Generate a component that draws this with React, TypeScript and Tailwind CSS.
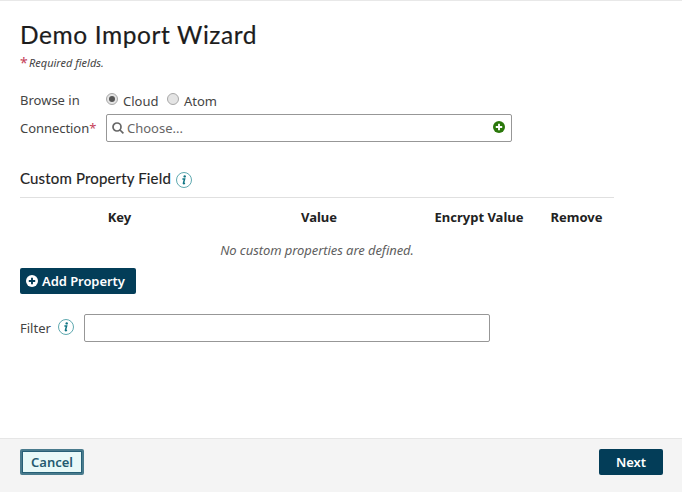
import React from "react";

function Info() {
  return (
    <span className="flex size-4 shrink-0 items-center justify-center rounded-full border border-[#5fa9b0] text-[#107584]">
      <svg width="8" height="10" viewBox="0 0 8 10" fill="none" className="block">
        <circle cx="4.7" cy="1.4" r="1.2" fill="currentColor" />
        <path d="M2.4 4h2.2L3.4 8.3q-.1.8 1.6 0" stroke="currentColor" strokeWidth="1.5" />
      </svg>
    </span>
  );
}

function Plus({ disc, mark }: { disc: string; mark: string }) {
  return (
    <svg width="12" height="12" viewBox="0 0 12 12" className="block shrink-0">
      <circle cx="6" cy="6" r="6" fill={disc} />
      <path d="M6 2.8v6.4M2.8 6h6.4" stroke={mark} strokeWidth="1.9" />
    </svg>
  );
}

function Radio({ checked }: { checked?: boolean }) {
  return (
    <span className="mb-[3px] flex size-[12px] shrink-0 items-center justify-center rounded-full border border-[#a8a8a8] bg-[#e4e4e4]">
      {checked && <span className="size-[6px] rounded-full bg-[#555]" />}
    </span>
  );
}

export default function App() {
  return (
    <div className="flex h-[492px] w-[682px] flex-col overflow-hidden border-t border-[#e8e8e8] bg-white font-['Noto_Sans','Open_Sans',sans-serif] text-[13px] leading-[18px] text-[#444]">
      <main className="flex flex-1 flex-col px-5">
        <h1 className="mt-[18px] h-8 whitespace-nowrap font-['Lato',sans-serif] text-[24.5px] leading-8 tracking-[0.6px] text-[#1c1c1c] [-webkit-text-stroke:0.2px_#1c1c1c]">Demo Import Wizard</h1>
        <p className="mt-[3px] flex text-[11px] italic leading-[18px]"><span className="w-[9px] text-[14px] not-italic text-[#c5415a]">*</span><span>Required fields.</span></p>
        <div className="mt-[19px] flex h-[18px] items-center">
          <span className="w-[86px]">Browse in</span>
          <Radio checked /><span className="ml-[5px] mr-[9px] mt-px w-[35px] whitespace-nowrap">Cloud</span>
          <Radio /><span className="ml-[5px] mt-px">Atom</span>
        </div>
        <div className="mt-[5px] flex h-7 items-center">
          <span className="w-[86px] shrink-0 whitespace-nowrap tracking-[-0.05px]">Connection<span className="text-[#c5415a]">*</span></span>
          <div className="flex h-7 w-[406px] items-center rounded-[2px] border border-[#979797] px-[5px]">
            <svg width="12" height="12" viewBox="0 0 12 12" fill="none" stroke="#666" strokeWidth="1.7"><circle cx="5" cy="5" r="4" /><path d="m8 8 3.4 3.4" /></svg>
            <span className="ml-[3px] flex-1 text-[#666]">Choose...</span>
            <div className="mb-[2px] mr-px"><Plus disc="#2b780b" mark="#fff" /></div>
          </div>
        </div>
        <div className="mt-[26px] flex h-[30px] w-[594px] items-start border-b border-[#e0e0e0]">
          <h2 className="w-[156px] whitespace-nowrap font-['Lato',sans-serif] text-[15px] leading-5 tracking-[0.16px] text-[#222] [-webkit-text-stroke:0.15px_#222]">Custom Property Field</h2>
          <div className="mt-1"><Info /></div>
        </div>
        <div className="mt-[10px] flex h-[18px] w-[594px] text-center font-bold text-[#222]">
          <span className="w-[199px]">Key</span><span className="w-[200px]">Value</span><span className="w-[120px]">Encrypt Value</span><span className="w-[75px]">Remove</span>
        </div>
        <p className="mt-[15px] w-[594px] text-center italic tracking-[-0.07px] text-[#606060]">No custom properties are defined.</p>
        <button className="mt-[9px] flex h-[26px] w-[116px] items-center whitespace-nowrap rounded-[2px] bg-[#033d58] pl-[6px] font-semibold tracking-[-0.06px] text-white"><Plus disc="#fff" mark="#033d58" /><span className="ml-1">Add Property</span></button>
        <div className="mt-5 flex h-7 items-center">
          <span className="w-[38px]">Filter</span><div className="mb-[2px]"><Info /></div><div className="ml-[10px] h-7 w-[406px] rounded-[2px] border border-[#979797]" />
        </div>
      </main>
      <footer className="flex h-[54px] shrink-0 items-center justify-between border-t border-[#e6e6e6] bg-[#f4f4f4] pl-5 pr-[19px] pb-[7px] font-semibold">
        <button className="h-[26px] w-16 rounded-[2px] border-2 border-[#497b8d] bg-[#e8f9f8] text-[#255b70] shadow-[inset_0_0_0_1px_#265f76]">Cancel</button>
        <button className="h-[26px] w-16 rounded-[2px] bg-[#033d58] text-white">Next</button>
      </footer>
    </div>
  );
}
